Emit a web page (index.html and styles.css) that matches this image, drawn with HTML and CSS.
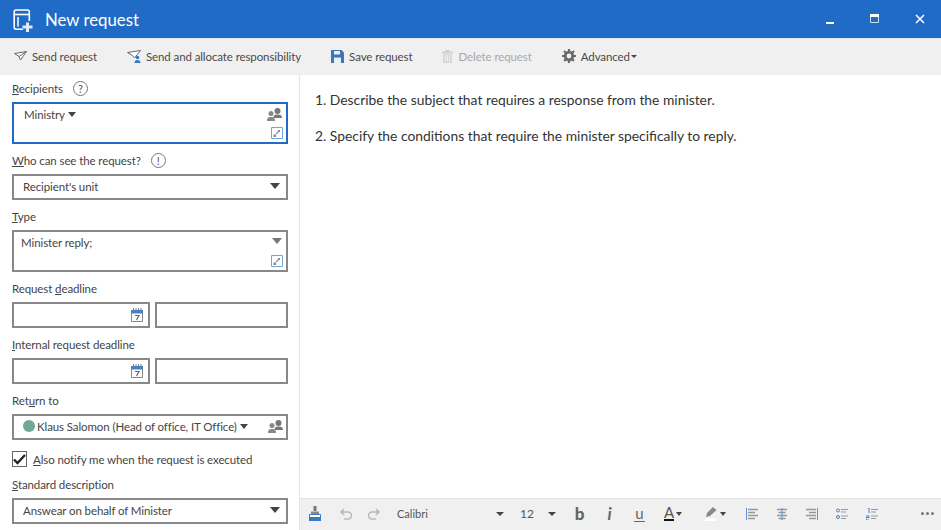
FILE: index.html
```html
<!DOCTYPE html>
<html lang="en">
<head>
<meta charset="utf-8">
<title>New request</title>
<link rel="stylesheet" href="styles.css">
</head>
<body>
<div class="app">
  <header class="titlebar">
    <svg class="app-icon" width="20" height="23" viewBox="0 0 20 23"><path d="M10 20.200H3A1.800 1.800 0 0 1 1.200 18.400V2.800A1.800 1.800 0 0 1 3 1h11.500a1.800 1.800 0 0 1 1.800 1.800V12" fill="none" stroke="#fff" stroke-width="1.600"/><path d="M1 5.500h15" stroke="#fff" stroke-width="1.600"/><path d="M5 8v9.500" stroke="#fff" stroke-width="1.500"/><path d="M13 13.500h3v3h3.500v3H16V23h-3v-3.500H9.500v-3H13z" fill="#dfeaf8"/></svg>
    <h1 class="title">New request</h1>
    <div class="win-controls">
      <svg class="win-btn" width="10" height="10" viewBox="0 0 10 10"><path d="M1 8h8v2.500H1z" fill="#fff"/></svg>
      <svg class="win-btn" width="10" height="10" viewBox="0 0 10 10"><path d="M.5.500h8v8h-8z" fill="none" stroke="#cfe0f5"/><path d="M0 0h9v3H0z" fill="#fff"/></svg>
      <svg class="win-btn" width="10" height="10" viewBox="0 0 10 10"><path d="M1 1l8 8M9 1l-8 8" stroke="#fff" stroke-width="1.500"/></svg>
    </div>
  </header>

  <nav class="toolbar">
    <div class="tool">
      <svg width="13" height="10" viewBox="0 0 13 10"><path d="M.5 2.500L12.500.500 6.500 9 5 5.500z" fill="#fff" stroke="#6a6a6a"/><path d="M5 5.500L12.500.500" fill="none" stroke="#6a6a6a"/></svg>
      <span>Send request</span>
    </div>
    <div class="tool">
      <svg width="14" height="13" viewBox="0 0 14 13"><path d="M.5 2.500L13.500.500 7.500 8 5.500 5.500z" fill="#fff" stroke="#6a6a6a"/><circle cx="10.500" cy="7.500" r="1.800" fill="#3a78c2"/><path d="M7.500 13c0-2 1-3 3-3s3 1 3 3z" fill="#3a78c2"/></svg>
      <span>Send and allocate responsibility</span>
    </div>
    <div class="tool">
      <svg width="13" height="13" viewBox="0 0 13 13"><path d="M0 0h10.500L13 2.500V13H0z" fill="#3f76b5"/><path d="M3 1h6v3.500H3z" fill="#e9eff6"/><path d="M3 7.500h7V13H3z" fill="#e9eff6"/></svg>
      <span>Save request</span>
    </div>
    <div class="tool tool-off">
      <svg width="11" height="13" viewBox="0 0 11 13"><path d="M0 1.500h11v1.500H0zM3.500 0h4v1.500h-4z" fill="#cfcfcf"/><path d="M1 3.500h9V13H1z" fill="#d6d6d6"/><path d="M3.500 5v6.500M5.500 5v6.500M7.500 5v6.500" stroke="#f0f0f0"/></svg>
      <span>Delete request</span>
    </div>
    <div class="tool">
      <svg width="14" height="14" viewBox="0 0 14 14"><circle cx="7" cy="7" r="3.800" fill="none" stroke="#6a6a6a" stroke-width="2.800"/><path d="M7 0v14M0 7h14M2 2l10 10M12 2L2 12" stroke="#6a6a6a" stroke-width="2.200" stroke-dasharray="2.200 9.600"/></svg>
      <span>Advanced</span>
      <i class="caret-mini"></i>
    </div>
  </nav>

  <main class="body">
    <aside class="side">
      <section class="field">
        <div class="label"><span><u>R</u>ecipients</span>
          <span class="hint">?</span>
        </div>
        <div class="box box-tall box-focus">
          <span class="pill">Ministry<i class="caret caret-sm"></i></span>
          <svg class="people" width="15" height="13" viewBox="0 0 15 13"><circle cx="10.500" cy="3" r="3" fill="#777"/><path d="M6.500 10c0-3 1.500-3.500 4-3.500s4.500.5 4.500 3.500z" fill="#777"/><circle cx="4" cy="5.500" r="2.500" fill="#888"/><path d="M0 13c0-3.500 1.500-4 4-4s4 .5 4 4z" fill="#888"/></svg>
          <svg class="expand" width="12" height="12" viewBox="0 0 12 12"><path d="M.5.500h11v11H.5z" fill="#fff" stroke="#6ea5dc"/><path d="M5 7l3-3" stroke="#999" stroke-width="1.500"/><path d="M6.500 3H9v2.500zM2.500 7.500h2.500V10H2.500z" fill="#888"/></svg>
        </div>
      </section>

      <section class="field">
        <div class="label"><span><u>W</u>ho can see the request?</span>
          <span class="hint">!</span>
        </div>
        <div class="box box-select"><span>Recipient's unit</span><i class="caret"></i></div>
      </section>

      <section class="field">
        <div class="label"><span><u>T</u>ype</span></div>
        <div class="box box-tall box-type">
          <span>Minister reply;</span>
          <i class="caret caret-grey"></i>
          <svg class="expand" width="12" height="12" viewBox="0 0 12 12"><path d="M.5.500h11v11H.5z" fill="#fff" stroke="#6ea5dc"/><path d="M5 7l3-3" stroke="#999" stroke-width="1.500"/><path d="M6.500 3H9v2.500zM2.500 7.500h2.500V10H2.500z" fill="#888"/></svg>
        </div>
      </section>

      <section class="field">
        <div class="label"><span>Request <u>d</u>eadline</span></div>
        <div class="date-row">
          <div class="box box-date">
            <svg width="12" height="14" viewBox="0 0 12 14"><path d="M.5 3.500h11v10H.5z" fill="#fff" stroke="#888"/><path d="M0 2h12v3.500H0z" fill="#4a80c0"/><path d="M2.500 0v2M5 0v2M7.500 0v2M10 0v2" stroke="#777"/><path d="M4 7.500h4L5.500 12" fill="none" stroke="#666" stroke-width="1.200"/></svg>
          </div>
          <div class="box box-time"></div>
        </div>
      </section>

      <section class="field">
        <div class="label"><span><u>I</u>nternal request deadline</span></div>
        <div class="date-row">
          <div class="box box-date">
            <svg width="12" height="14" viewBox="0 0 12 14"><path d="M.5 3.500h11v10H.5z" fill="#fff" stroke="#888"/><path d="M0 2h12v3.500H0z" fill="#4a80c0"/><path d="M2.500 0v2M5 0v2M7.500 0v2M10 0v2" stroke="#777"/><path d="M4 7.500h4L5.500 12" fill="none" stroke="#666" stroke-width="1.200"/></svg>
          </div>
          <div class="box box-time"></div>
        </div>
      </section>

      <section class="field">
        <div class="label"><span>Ret<u>u</u>rn to</span></div>
        <div class="box box-person">
          <i class="status"></i>
          <span class="nowrap">Klaus Salomon (Head of office, IT Office)</span>
          <i class="caret caret-sm"></i>
          <svg class="people-end" width="15" height="13" viewBox="0 0 15 13"><circle cx="10.500" cy="3" r="3" fill="#777"/><path d="M6.500 10c0-3 1.500-3.500 4-3.500s4.500.5 4.500 3.500z" fill="#777"/><circle cx="4" cy="5.500" r="2.500" fill="#888"/><path d="M0 13c0-3.500 1.500-4 4-4s4 .5 4 4z" fill="#888"/></svg>
        </div>
      </section>

      <label class="check-row">
        <span class="check">
          <svg width="13" height="11" viewBox="0 0 13 11"><path d="M1 5.500l3.500 3.500L12 1" fill="none" stroke="#222" stroke-width="2.400"/></svg>
        </span>
        <span><u>A</u>lso notify me when the request is executed</span>
      </label>

      <section class="field">
        <div class="label"><span><u>S</u>tandard description</span></div>
        <div class="box box-select"><span>Answear on behalf of Minister</span><i class="caret"></i></div>
      </section>
    </aside>

    <div class="editor">
      <div class="doc">
        <p>1. Describe the subject that requires a response from the minister.</p>
        <p>2. Specify the conditions that require the minister specifically to reply.</p>
      </div>
      <div class="format">
        <span class="cell cell-brush">
          <svg width="12" height="15" viewBox="0 0 12 15"><path d="M4.500 0h3v5h-3z" fill="#777"/><path d="M2 5.500h8v3H2z" fill="#888"/><path d="M.5 8.500h11V14H.5z" fill="#fff" stroke="#3a78c2"/><path d="M0 11h12v4H0z" fill="#3a78c2"/></svg>
        </span>
        <span class="cell cell-undo">
          <svg width="12" height="12" viewBox="0 0 12 12"><path d="M4 1L1 4l3 3M1.500 4H8a3 3 0 0 1 0 7H4" fill="none" stroke="#bbb" stroke-width="1.600"/></svg>
        </span>
        <span class="cell cell-redo">
          <svg width="12" height="12" viewBox="0 0 12 12"><path d="M8 1l3 3-3 3M10.500 4H4a3 3 0 0 0 0 7h4" fill="none" stroke="#bbb" stroke-width="1.600"/></svg>
        </span>
        <span class="cell-font"><span>Calibri</span><i class="caret caret-fmt"></i></span>
        <span class="cell-size"><span>12</span><i class="caret caret-fmt"></i></span>
        <span class="cell cell-b"><b class="fmt-b">b</b></span>
        <span class="cell cell-i"><i class="fmt-i">i</i></span>
        <span class="cell cell-u"><span class="fmt-u">u</span></span>
        <span class="cell-color">
          <span class="fmt-a">A</span><i class="caret caret-mid"></i>
        </span>
        <span class="cell-pen">
          <svg width="12" height="14" viewBox="0 0 12 14"><path d="M8 0l3.500 3L5 9 1 10l1-4z" fill="#888"/><path d="M0 11.500h11V14H0z" fill="#fff"/></svg>
          <i class="caret caret-mid"></i>
        </span>
        <span class="cell cell-al">
          <svg width="12" height="12" viewBox="0 0 12 12"><path d="M.5 0v12" stroke="#5b93d3"/><path d="M2 1.500h10M2 4.500h7M2 7.500h10M2 10.500h7" stroke="#999" stroke-width="1.400"/></svg>
        </span>
        <span class="cell cell-ac">
          <svg width="12" height="12" viewBox="0 0 12 12"><path d="M1 1.500h10M2.500 4.500h7M1 7.500h10M2.500 10.500h7" stroke="#999" stroke-width="1.400"/><path d="M6 0v12" stroke="#5b93d3"/></svg>
        </span>
        <span class="cell cell-ar">
          <svg width="12" height="12" viewBox="0 0 12 12"><path d="M11.500 0v12" stroke="#5b93d3"/><path d="M0 1.500h10M3 4.500h7M0 7.500h10M3 10.500h7" stroke="#999" stroke-width="1.400"/></svg>
        </span>
        <span class="cell cell-bl">
          <svg width="12" height="12" viewBox="0 0 12 12"><circle cx="2" cy="2.500" r="1.500" fill="none" stroke="#4a80c0"/><circle cx="2" cy="9" r="1.500" fill="none" stroke="#4a80c0"/><path d="M5 1.500h7M5 4h5M5 8h7M5 10.500h5" stroke="#999"/></svg>
        </span>
        <span class="cell cell-nl">
          <svg width="12" height="12" viewBox="0 0 12 12"><path d="M1.500 0h1.500v5M0 8h3v1.500H0V12h3" fill="none" stroke="#4a80c0"/><path d="M5 1.500h7M5 4h5M5 8h7M5 10.500h5" stroke="#999"/></svg>
        </span>
        <span class="more"><i></i><i></i><i></i></span>
      </div>
    </div>
  </main>
</div>
</body>
</html>
```
FILE: styles.css
```css
* { box-sizing: border-box; }
html, body { margin: 0; padding: 0; }
body { font-family: Lato, "Open Sans", sans-serif; color: #444; background: #fff; }
.app { width: 941px; height: 530px; display: flex; flex-direction: column; overflow: hidden; }

.titlebar { height: 38px; flex: none; background: #1f6bc6; color: #fff; display: flex; align-items: center; padding-left: 13px; }
.app-icon { flex: none; margin-top: 3px; }
.title { margin: 0 0 0 12px; font-size: 16.800px; font-weight: 400; }
.win-controls { margin-left: auto; display: flex; }
.win-btn { margin-right: 35px; }
.win-btn:last-child { margin-right: 16px; }

.toolbar { height: 37px; flex: none; background: #f0f0f0; border-top: 1px solid #e2e6ec; display: flex; align-items: center; gap: 30px; padding-left: 14px; padding-bottom: 2px; font-size: 11.500px; letter-spacing: -.1px; color: #4a4a4a; }
.tool { display: flex; align-items: center; gap: 5px; white-space: nowrap; }
.tool-off { color: #a8a8a8; }
.caret-mini { width: 0; height: 0; border: 3px solid transparent; border-top-color: #444; border-bottom: 0; margin-left: -4px; }

.body { flex: 1; min-height: 0; display: flex; }
.side { width: 300px; flex: none; border-right: 1px solid #e4e4e4; padding: 4px 11px 0 12px; font-size: 11.500px; letter-spacing: -.1px; }
.field { margin-bottom: 7px; }
.label { height: 20px; margin-bottom: 3px; padding-bottom: 2px; display: flex; align-items: center; gap: 10px; white-space: nowrap; }
.hint { width: 15px; height: 15px; border: 1.400px solid #777; border-radius: 50%; display: flex; align-items: center; justify-content: center; font-size: 11px; line-height: 1; color: #555; }

.box { border: 2px solid #888; background: #fff; position: relative; display: flex; }
.box-tall { height: 42px; }
.box-focus { border-color: #1f6bc6; padding: 2px 10px; }
.box-select { height: 26px; align-items: center; justify-content: space-between; padding: 0 6px 2px 9px; }
.box-type { padding: 4px 7px; }
.pill { display: inline-flex; align-items: center; height: 17px; }
.people { position: absolute; top: 4px; right: 4px; }
.expand { position: absolute; right: 3px; bottom: 3px; }
.nowrap { white-space: nowrap; }

.caret { width: 0; height: 0; border-left: 5.500px solid transparent; border-right: 5.500px solid transparent; border-top: 6px solid #444; border-bottom: 0; }
.caret-sm { border-left-width: 4.500px; border-right-width: 4.500px; border-top-width: 5px; margin-left: 3px; }
.caret-grey { position: absolute; top: 6px; right: 4px; border-top-color: #777; }
.caret-fmt { border-left-width: 4.500px; border-right-width: 4.500px; border-top-width: 4.500px; }
.caret-mid { border-left-width: 3.500px; border-right-width: 3.500px; border-top-width: 4px; }

.date-row { display: flex; gap: 5px; }
.box-date { width: 138px; height: 26px; align-items: center; justify-content: flex-end; padding-right: 5px; }
.box-time { flex: 1; height: 26px; }
.box-person { height: 26px; align-items: center; padding: 0 0 2px 9px; }
.status { width: 12px; height: 12px; border-radius: 50%; background: #6fa897; margin-right: 2px; flex: none; }
.people-end { margin-left: auto; margin-right: 3px; }

.check-row { height: 24px; margin-bottom: 4px; display: flex; align-items: center; gap: 6px; }
.check { width: 15px; height: 16px; border: 1px solid #666; background: #fff; display: flex; align-items: center; justify-content: center; flex: none; }

.editor { flex: 1; min-width: 0; display: flex; flex-direction: column; }
.doc { flex: 1; padding: 15px 0 0 15px; font-size: 13.850px; color: #333; }
.doc p { margin: 0 0 16px; line-height: 20px; }
.format { height: 32px; flex: none; background: #f0f0f0; border-top: 1px solid #e2e2e2; display: flex; align-items: center; padding-left: 9px; padding-bottom: 2px; font-size: 11px; color: #555; }
.cell { display: flex; align-items: center; justify-content: center; width: 29px; margin-right: 1px; flex: none; }
.cell-brush { margin-left: -9px; width: 30px; }
.cell-redo { margin-left: -2px; }
.cell-font { width: 107px; margin-left: 8px; display: flex; align-items: center; justify-content: space-between; flex: none; }
.cell-size { width: 36px; margin-left: 16px; margin-right: 9px; font-size: 12px; display: flex; align-items: center; justify-content: space-between; flex: none; }
.fmt-b { font-size: 17px; font-weight: 900; color: #666; line-height: 1; }
.fmt-i { font-size: 17px; font-weight: 700; color: #666; line-height: 1; }
.fmt-u { font-size: 15px; color: #666; line-height: 1; padding: 0 1px; border-bottom: 1px solid #666; }
.cell-color { width: 24px; margin-left: 9px; display: flex; align-items: center; gap: 2px; flex: none; }
.fmt-a { font-size: 15px; line-height: 13px; border-bottom: 2px solid #111; color: #555; }
.cell-pen { width: 24px; margin-left: 17px; display: flex; align-items: center; gap: 3px; flex: none; }
.cell-al { margin-left: 8px; }
.more { margin-left: auto; margin-right: 7px; display: flex; gap: 2px; }
.more i { width: 3px; height: 3px; border-radius: 50%; background: #777; }
```
